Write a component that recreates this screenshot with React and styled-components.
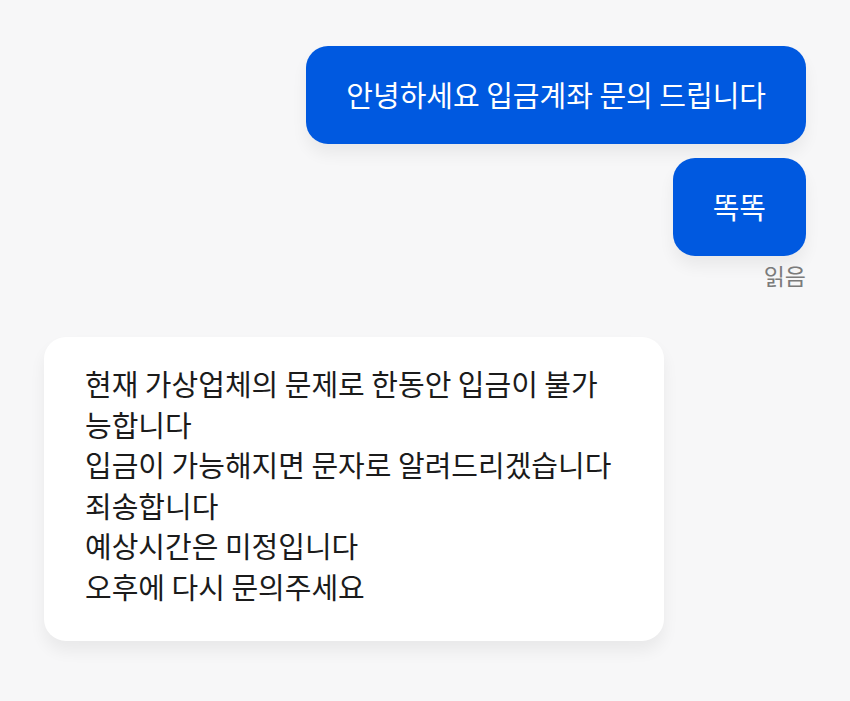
import styled, { createGlobalStyle } from "styled-components";

// 기본 페이지 스타일
const GlobalStyle = createGlobalStyle`
  html, body {
    margin: 0;
    padding: 0;
    background: #f7f7f8;
  }
  body {
    font-family: "Noto Sans CJK KR", "Noto Sans", sans-serif;
    -webkit-font-smoothing: antialiased;
  }
`;

// 채팅 영역 전체
const ChatWrap = styled.div`
  width: 850px;
  height: 701px;
  box-sizing: border-box;
  padding: 46px 44px 0;
  display: flex;
  flex-direction: column;
  background: #f7f7f8;
  overflow: hidden;
`;

// 내가 보낸 메시지 묶음
const SentGroup = styled.div`
  display: flex;
  flex-direction: column;
  align-items: flex-end;
  gap: 14px;
`;

// 말풍선
const Bubble = styled.div`
  box-sizing: border-box;
  padding: ${({ $mine }) => ($mine ? "28px 40px 29px" : "26px 41px 35px")};
  border-radius: 22px;
  font-size: 29px;
  line-height: ${({ $mine }) => ($mine ? "41px" : "40.5px")};
  white-space: pre-line;
  background: ${({ $mine }) => ($mine ? "#0059e0" : "#ffffff")};
  color: ${({ $mine }) => ($mine ? "#ffffff" : "#1b1b1b")};
  box-shadow: 0 10px 16px rgba(0, 0, 0, 0.06);
  width: ${({ $width }) => $width || "auto"};
`;

// 읽음 표시
const ReadMark = styled.div`
  margin-top: -10px;
  font-size: 23px;
  line-height: 30px;
  color: #7b7b7b;
`;

// 상대방 메시지 묶음
const ReceivedGroup = styled.div`
  display: flex;
  margin-top: 47px;
`;

const reply = `현재 가상업체의 문제로 한동안 입금이 불가
능합니다
입금이 가능해지면 문자로 알려드리겠습니다
죄송합니다
예상시간은 미정입니다
오후에 다시 문의주세요`;

export default function App() {
  return (
    <>
      <GlobalStyle />
      <ChatWrap>
        <SentGroup>
          <Bubble $mine>안녕하세요 입금계좌 문의 드립니다</Bubble>
          <Bubble $mine>똑똑</Bubble>
          <ReadMark>읽음</ReadMark>
        </SentGroup>

        <ReceivedGroup>
          <Bubble $width="620px">{reply}</Bubble>
        </ReceivedGroup>
      </ChatWrap>
    </>
  );
}
